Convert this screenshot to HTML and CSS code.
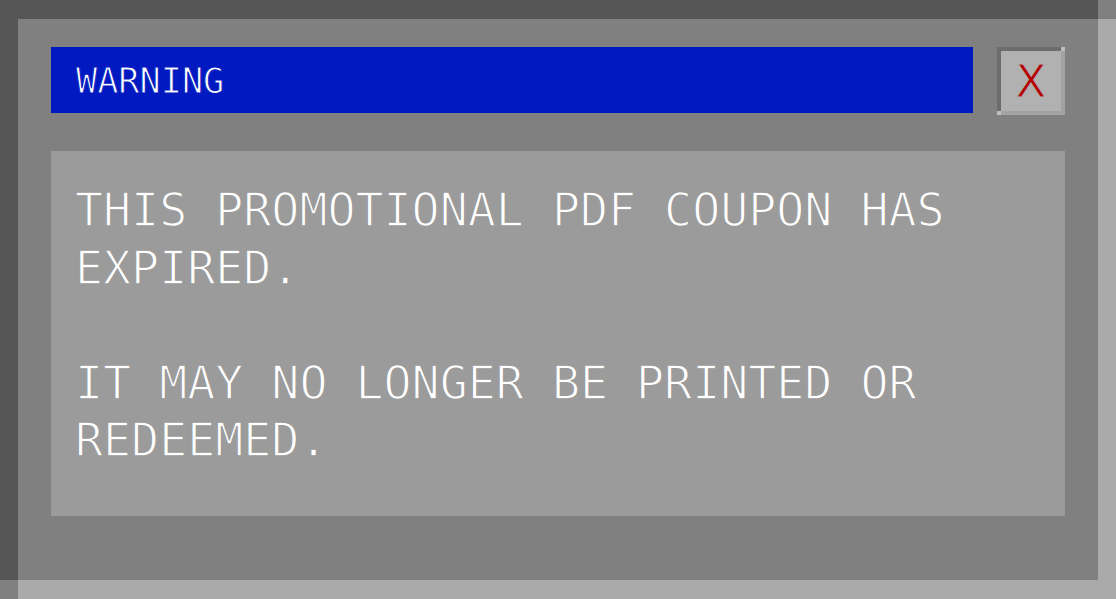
FILE: index.html
```html
<!DOCTYPE html>
<html lang="en">
<head>
<meta charset="utf-8">
<title>Warning</title>
<link rel="stylesheet" href="styles.css">
</head>
<body>
<div class="screen">
  <div class="panel">
    <div class="title-row">
      <div class="title-bar">WARNING</div>
      <button class="close-btn" type="button" aria-label="Close">X</button>
    </div>
    <div class="message">
      <p>THIS PROMOTIONAL PDF COUPON HAS EXPIRED.</p>
      <p>IT MAY NO LONGER BE PRINTED OR REDEEMED.</p>
    </div>
  </div>
</div>
</body>
</html>
```

FILE: styles.css
```css
* {
  box-sizing: border-box;
}

html, body {
  margin: 0;
  padding: 0;
}

body {
  width: 1116px;
  height: 599px;
  overflow: hidden;
  font-family: "DejaVu Sans Mono", "Liberation Mono", monospace;
}

.screen {
  width: 1116px;
  height: 599px;
  padding: 19px 18px 19px 18px;
  background:
    linear-gradient(#565656, #565656) left top / calc(100% - 18px) 19px no-repeat,
    linear-gradient(#565656, #565656) left top / 18px calc(100% - 19px) no-repeat,
    linear-gradient(#aaaaaa, #aaaaaa) right bottom / 18px calc(100% - 19px) no-repeat,
    linear-gradient(#aaaaaa, #aaaaaa) right bottom / calc(100% - 18px) 19px no-repeat,
    #808080;
}

.panel {
  height: 100%;
  background: #808080;
  padding: 28px 33px 0 33px;
  display: flex;
  flex-direction: column;
  gap: 36px;
}

.title-row {
  display: flex;
  align-items: flex-start;
  gap: 24px;
}

.title-bar {
  flex: 1;
  height: 66px;
  background: #0019c1;
  color: #ffffff;
  font-size: 35.2px;
  -webkit-text-stroke: 1px #0019c1;
  paint-order: fill stroke;
  display: flex;
  align-items: center;
  padding-left: 25px;
}

.close-btn {
  position: relative;
  width: 68px;
  height: 68px;
  padding: 0;
  margin: 0;
  background: #b1b1b1;
  border-style: solid;
  border-width: 4px;
  border-color: #6c6c6c #a3a3a3 #a3a3a3 #6c6c6c;
  color: #b40000;
  font-family: "DejaVu Sans", "Liberation Sans", sans-serif;
  font-size: 45px;
  line-height: 1;
  -webkit-text-stroke: 1px #b1b1b1;
  paint-order: fill stroke;
  display: flex;
  align-items: center;
  justify-content: center;
  cursor: pointer;
}

.close-btn::before,
.close-btn::after {
  content: "";
  position: absolute;
  width: 4px;
  height: 4px;
  background: #bdbdbd;
}

.close-btn::before {
  top: -4px;
  right: -4px;
}

.close-btn::after {
  bottom: -4px;
  left: -4px;
}

.message {
  background: #9b9b9b;
  color: #ffffff;
  font-size: 46.6px;
  line-height: 57.5px;
  -webkit-text-stroke: 1.4px #9b9b9b;
  paint-order: fill stroke;
  padding: 31px 60px 46px 24px;
  height: 365px;
}

.message p {
  margin: 0;
}

.message p + p {
  margin-top: 57.5px;
}
```
